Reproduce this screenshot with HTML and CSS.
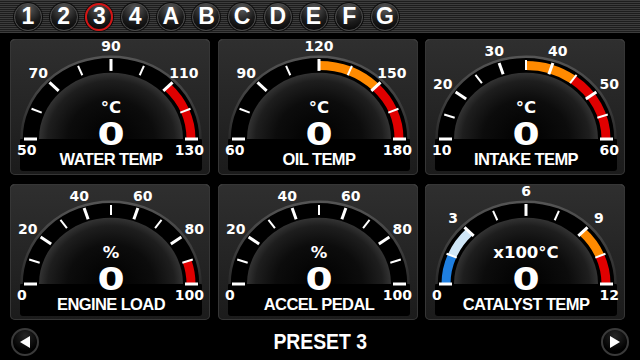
FILE: index.html
```html
<!DOCTYPE html>
<html lang="en">
<head>
    <meta charset="UTF-8">
    <meta name="viewport" content="width=device-width, initial-scale=1.0">
    <title>Gauges</title>
    <link rel="stylesheet" href="styles.css">
</head>
<body>
<svg class="defs" width="0" height="0">
    <defs>
        <radialGradient id="dome" gradientUnits="userSpaceOnUse" cx="0" cy="0" r="72"
                        gradientTransform="translate(101 100) scale(1 0.92)">
            <stop offset="0" stop-color="#000"/>
            <stop offset="0.6" stop-color="#0c0c0c"/>
            <stop offset="0.88" stop-color="#1e1e1e"/>
            <stop offset="1" stop-color="#333"/>
        </radialGradient>
        <linearGradient id="rim" x1="0" y1="0" x2="0" y2="1">
            <stop offset="0" stop-color="#555"/>
            <stop offset="1" stop-color="#2a2a2a"/>
        </linearGradient>
    </defs>
</svg>

<div class="topbar">
    <span class="page-btn">1</span>
    <span class="page-btn">2</span>
    <span class="page-btn active">3</span>
    <span class="page-btn">4</span>
    <span class="page-btn">A</span>
    <span class="page-btn">B</span>
    <span class="page-btn">C</span>
    <span class="page-btn">D</span>
    <span class="page-btn">E</span>
    <span class="page-btn">F</span>
    <span class="page-btn">G</span>
</div>

<div class="gauges" id="gauges"></div>

<div class="footer">
    <span class="nav-btn">
        <svg width="14" height="14" viewBox="0 0 14 14"><polygon points="2,7 12,1 12,13" fill="#fff"/></svg>
    </span>
    <span class="preset">PRESET 3</span>
    <span class="nav-btn">
        <svg width="14" height="14" viewBox="0 0 14 14"><polygon points="12,7 2,1 2,13" fill="#fff"/></svg>
    </span>
</div>

<script>
    const RED = '#e00000', ORANGE = '#ff8a00', BLUE = '#1f7fe0', ICE = '#cfe6f7';

    const gauges = [
        { title: 'WATER TEMP', unit: '°C', min: 50, max: 130, step: 10, label: 20, zones: [[110, 130, RED]] },
        { title: 'OIL TEMP', unit: '°C', min: 60, max: 180, step: 15, label: 30, zones: [[120, 150, ORANGE], [150, 180, RED]] },
        { title: 'INTAKE TEMP', unit: '°C', min: 10, max: 60, step: 5, label: 10, zones: [[35, 45, ORANGE], [45, 60, RED]] },
        { title: 'ENGINE LOAD', unit: '%', min: 0, max: 100, step: 10, label: 20, zones: [[90, 100, RED]] },
        { title: 'ACCEL PEDAL', unit: '%', min: 0, max: 100, step: 10, label: 20, zones: [] },
        { title: 'CATALYST TEMP', unit: 'x100°C', min: 0, max: 12, step: 1.5, label: 3,
          zones: [[0, 1.5, BLUE], [1.5, 3, ICE], [9, 10.5, ORANGE], [10.5, 12, RED]] }
    ];

    const CX = 101, CY = 100, SY = 0.92;

    // angle 0 = left end, PI = right end
    function pt(a, r) {
        return [CX - r * Math.cos(a), CY - r * SY * Math.sin(a)];
    }
    function arc(a0, a1, r) {
        const p0 = pt(a0, r), p1 = pt(a1, r);
        return `M${p0[0]} ${p0[1]} A${r} ${r * SY} 0 0 1 ${p1[0]} ${p1[1]}`;
    }

    function gaugeSvg(g) {
        const ang = v => Math.PI * (v - g.min) / (g.max - g.min);
        let s = '<svg class="gauge" viewBox="0 0 200 136" width="200" height="136">';

        // face
        s += `<rect class="face" x="${CX - 91}" y="${CY - 1}" width="182" height="33" rx="3"/>`;
        s += `<path class="face" d="${arc(0, Math.PI, 90)} Z"/>`;
        s += `<path class="rim" d="${arc(0, Math.PI, 89.5)}"/>`;
        s += `<path fill="url(#dome)" d="${arc(0, Math.PI, 72)} Z"/>`;

        // colour zones
        g.zones.forEach(z => {
            s += `<path class="zone" stroke="${z[2]}" d="${arc(ang(z[0]), ang(z[1]), 80)}"/>`;
        });

        // ticks and labels
        const n = Math.round((g.max - g.min) / g.step);
        for (let i = 0; i <= n; i++) {
            const v = g.min + i * g.step;
            const a = ang(v);
            const major = Math.abs(((v - g.min) / g.label) - Math.round((v - g.min) / g.label)) < 0.001;
            const p0 = pt(a, major ? 74 : 75), p1 = pt(a, major ? 87 : 86);
            s += `<line class="${major ? 'tick major' : 'tick'}" x1="${p0[0]}" y1="${p0[1]}" x2="${p1[0]}" y2="${p1[1]}"/>`;
            if (!major) continue;
            if (i === 0) {
                s += `<text class="scale" x="${CX - 94}" y="${CY + 16}" text-anchor="start">${v}</text>`;
            } else if (i === n) {
                s += `<text class="scale" x="${CX + 93}" y="${CY + 16}" text-anchor="end">${v}</text>`;
            } else {
                const x = CX - 103 * Math.cos(a), y = CY - 93 * Math.sin(a) + 5;
                s += `<text class="scale" x="${x}" y="${y}" text-anchor="middle">${v}</text>`;
            }
        }

        // readout
        s += `<text class="unit" x="${CX}" y="${CY - 26}" text-anchor="middle">${g.unit}</text>`;
        s += `<text class="value" transform="translate(${CX} ${CY + 6}) scale(1.22 1)" text-anchor="middle">0</text>`;
        s += `<text class="title" x="${CX}" y="${CY + 26}" text-anchor="middle">${g.title}</text>`;
        return s + '</svg>';
    }

    document.getElementById('gauges').innerHTML =
        gauges.map(g => `<div class="card">${gaugeSvg(g)}</div>`).join('');
</script>
</body>
</html>
```

FILE: styles.css
```css
body {
    margin: 0;
    width: 640px;
    height: 360px;
    overflow: hidden;
    background: #000;
    font-family: "Liberation Sans", Arial, sans-serif;
    color: #fff;
}
.defs {
    display: block;
    width: 0;
    height: 0;
}

/* page buttons */
.topbar {
    height: 33px;
    display: flex;
    align-items: center;
    gap: 7.7px;
    padding-left: 14px;
    background: repeating-linear-gradient(#3d3d3d 0 1px, #1d1d1d 1px 2px);
}
.page-btn {
    width: 28px;
    height: 28px;
    box-sizing: border-box;
    border-radius: 50%;
    border: 1.5px solid #4a4a4a;
    background: radial-gradient(circle at 50% 18%, #5a5a5a 0, #1c1c1c 55%, #000 100%);
    box-shadow: 0 0 0 1px #0c0c0c;
    display: flex;
    align-items: center;
    justify-content: center;
    font-weight: bold;
    font-size: 23px;
    line-height: 1;
}
.page-btn.active {
    border: 2px solid #d41414;
}

/* gauge cards */
.gauges {
    display: grid;
    grid-template-columns: repeat(3, 200px);
    grid-auto-rows: 136px;
    column-gap: 7.5px;
    row-gap: 9px;
    padding: 6px 0 0 10px;
}
.card {
    border-radius: 5px;
    background: linear-gradient(#2f2f2f, #1b1b1b);
    box-shadow: inset 0 0 0 1px #363636, inset 0 1px 0 #585858;
}
.gauge {
    display: block;
}
.face {
    fill: #000;
}
.rim {
    fill: none;
    stroke: url(#rim);
    stroke-width: 2.5;
}
.zone {
    fill: none;
    stroke-width: 9;
}
.tick {
    stroke: #fff;
    stroke-width: 2;
}
.tick.major {
    stroke-width: 3;
}
.scale {
    fill: #fff;
    font-family: "DejaVu Sans", sans-serif;
    font-weight: bold;
    font-size: 14px;
}
.unit {
    fill: #fff;
    font-family: "DejaVu Sans", sans-serif;
    font-weight: bold;
    font-size: 16.5px;
}
.value {
    fill: #fff;
    font-family: "DejaVu Sans", sans-serif;
    font-weight: bold;
    font-size: 32px;
}
.title {
    fill: #fff;
    font-family: "Liberation Sans", Arial, sans-serif;
    font-weight: bold;
    font-size: 16.5px;
    letter-spacing: -0.6px;
}

/* bottom bar */
.footer {
    height: 40px;
    box-sizing: border-box;
    padding: 4px 11px 0;
    display: flex;
    align-items: center;
    justify-content: space-between;
}
.nav-btn {
    width: 28px;
    height: 28px;
    box-sizing: border-box;
    border-radius: 50%;
    border: 2px solid #3a3a3a;
    background: radial-gradient(circle at 50% 25%, #262626 0, #000 70%);
    display: flex;
    align-items: center;
    justify-content: center;
}
.nav-btn svg {
    display: block;
}
.preset {
    display: inline-block;
    font-weight: bold;
    font-size: 22px;
    transform: scaleX(0.88);
}
```
